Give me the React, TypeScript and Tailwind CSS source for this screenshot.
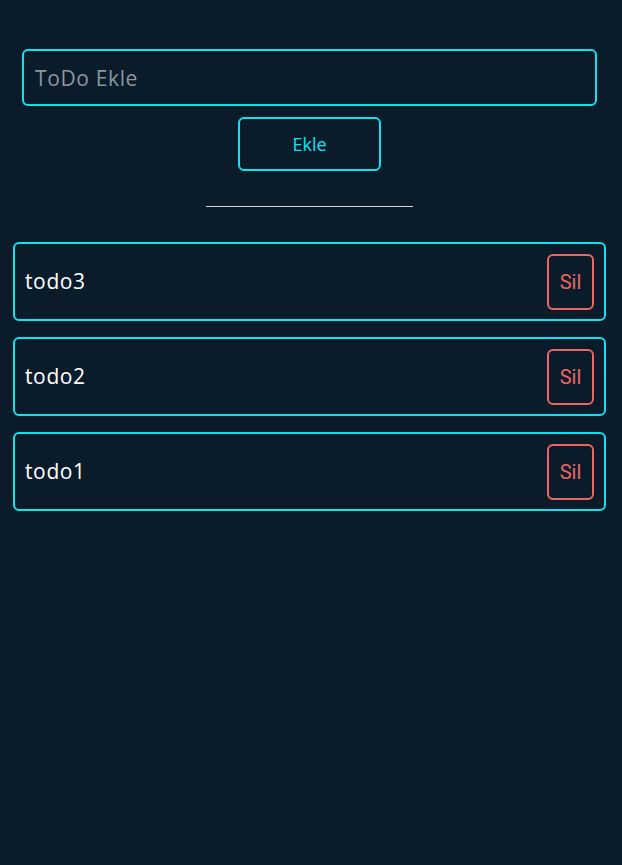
import React from "react";

const todos = ["todo3", "todo2", "todo1"];

export default function App() {
  return (
    <div className="min-h-[865px] w-full bg-[#0a1c2a] pt-[49px]" style={{ fontFamily: "'Open Sans', Inter, sans-serif" }}>
      <div className="px-[22px] pr-[25px]">
        <input
          className="block h-[57px] w-full rounded-[6px] border-2 border-[#0de3f2] bg-transparent px-[11px] text-[21px] tracking-[0.03em] text-white outline-none placeholder:text-[#8d96a0]"
          placeholder="ToDo Ekle"
        />
      </div>
      <div className="mt-[11px] flex justify-center pr-[3px]">
        <button className="h-[54px] w-[143px] rounded-[6px] border-2 border-[#0de3f2] bg-transparent text-[18px] text-[#0de3f2]">
          Ekle
        </button>
      </div>
      <div className="mt-[35px] flex justify-center pr-[3px]">
        <div className="h-px w-[207px] bg-[#d0d6dc]" />
      </div>
      <div className="mt-[35px] flex flex-col gap-[16px] px-[13px] pr-[16px]">
        {todos.map((t) => (
          <div
            key={t}
            className="flex h-[79px] items-center justify-between rounded-[6px] border-2 border-[#0de3f2] pl-[10px] pr-[10px]"
          >
            <span className="text-[21px] tracking-[0.03em] text-white">{t}</span>
            <button
              className="h-[56px] w-[47px] rounded-[6px] border-2 border-[#ee6563] bg-transparent text-[20px] text-[#ee6563]"
              style={{ fontFamily: "Roboto, sans-serif" }}
            >
              Sil
            </button>
          </div>
        ))}
      </div>
    </div>
  );
}
